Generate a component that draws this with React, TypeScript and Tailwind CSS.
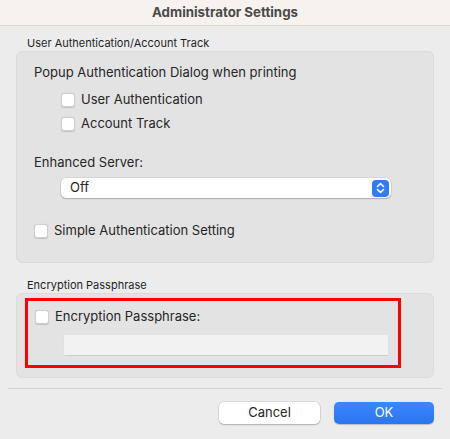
import React from 'react';

function Check({ label }: { label: string }) {
  return (
    <div className="flex items-center gap-[6px] h-[24px]">
      <span className="w-[14px] h-[14px] rounded-[3px] bg-white border border-[#cfcfcf] shadow-[0_0.5px_1px_rgba(0,0,0,0.15)]" />
      <span>{label}</span>
    </div>
  );
}

export default function App() {
  return (
    <div
      className="w-[450px] h-[439px] bg-[#ececec] flex flex-col text-[13px] text-[#262626] overflow-hidden"
      style={{ fontFamily: 'Inter, "Liberation Sans", sans-serif' }}
    >
      <div className="h-[26px] shrink-0 bg-[#f6f3ef] border-b border-[#d9d6d2] flex items-center justify-center font-bold text-[13.3px] text-[#4a4a4a]">
        Administrator Settings
      </div>

      <div className="px-[16px]">
        <div className="mt-[10px] pl-[11px] text-[11px] leading-[14px] text-[#1f1f1f]">User Authentication/Account Track</div>
        <div className="mt-px h-[212px] rounded-[6px] bg-[#e3e3e3] border border-[#dbdbdb] pl-[17px] pr-[42px] pt-[12px]">
          <div className="leading-[16px]">Popup Authentication Dialog when printing</div>
          <div className="pl-[27px] mt-[8px]">
            <Check label="User Authentication" />
            <Check label="Account Track" />
          </div>
          <div className="mt-[18px] leading-[16px]">Enhanced Server:</div>
          <div className="ml-[27px] mt-[8px] h-[20px] bg-white rounded-[5px] shadow-[0_0_0_0.5px_rgba(0,0,0,0.12),0_1px_1.5px_rgba(0,0,0,0.2)] flex items-center justify-between pl-[9px] pr-[2px]">
            <span>Off</span>
            <span className="w-[17px] h-[17px] rounded-[4px] bg-[#2f7cf6] flex items-center justify-center">
              <svg width="9" height="12" viewBox="0 0 9 12" fill="none" stroke="white" strokeWidth="1.6" strokeLinecap="round" strokeLinejoin="round">
                <path d="M1.5 4.5 L4.5 1.5 L7.5 4.5" />
                <path d="M1.5 7.5 L4.5 10.5 L7.5 7.5" />
              </svg>
            </span>
          </div>
          <div className="mt-[21px]">
            <Check label="Simple Authentication Setting" />
          </div>
        </div>

        <div className="mt-[15px] pl-[11px] text-[11px] leading-[14px] text-[#1f1f1f]">Encryption Passphrase</div>
        <div className="relative mt-[1px] h-[85px] rounded-[6px] bg-[#e3e3e3] border border-[#dbdbdb] pl-[18px] pt-[11px] pr-[45px]">
          <Check label="Encryption Passphrase:" />
          <div className="ml-[29px] mt-[6px] h-[20px] bg-[#f2f2f2] shadow-[0_0.5px_1px_rgba(0,0,0,0.1)]" />
          <div className="absolute left-[8px] top-[4px] w-[376px] h-[70px] border-[3px] border-[#ff0000]" />
        </div>
      </div>

      <div className="mx-[8px] mt-[10px] border-t border-[#d4d4d4]" />

      <div className="flex justify-end gap-[14px] pr-[16px] mt-[13px]">
        <button className="w-[101px] h-[22px] rounded-[5px] bg-white text-[#262626] shadow-[0_0_0_0.5px_rgba(0,0,0,0.15),0_1px_1.5px_rgba(0,0,0,0.2)] text-[13px]">
          Cancel
        </button>
        <button className="w-[100px] h-[22px] rounded-[5px] bg-gradient-to-b from-[#3d87f7] to-[#2b74f3] text-white text-[13px] shadow-[0_0.5px_1px_rgba(0,0,0,0.2)]">
          OK
        </button>
      </div>
    </div>
  );
}
